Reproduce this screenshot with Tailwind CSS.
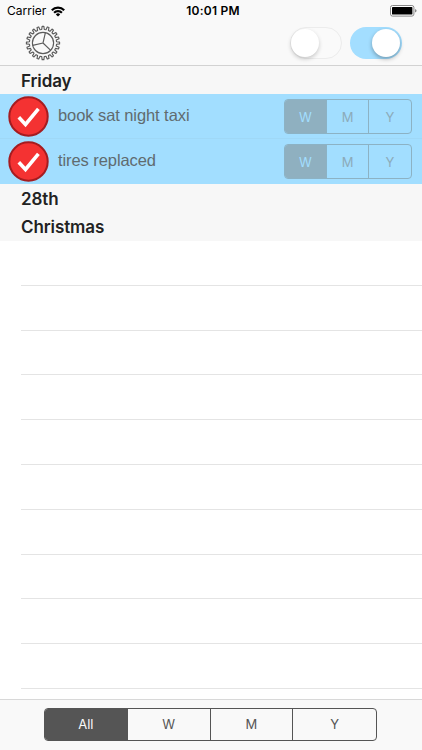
<!DOCTYPE html>
<html lang="en">
<head>
  <meta charset="UTF-8"/>
  <meta name="viewport" content="width=device-width,initial-scale=1.0"/>
  <title>Reminders</title>
  <script src="https://cdn.jsdelivr.net/npm/@tailwindcss/browser@4"></script>
</head>
<body class="bg-white font-['Inter',sans-serif] text-[#222]">
  <div class="flex flex-col h-[750px] w-[422px] overflow-hidden">

    <!-- Status bar + toolbar -->
    <header class="h-[66px] shrink-0 bg-[#f9f9f9] border-b border-[#d2d2d2]">
      <div class="grid grid-cols-3 items-center h-[22px] pl-[7px] pr-[5px] text-black">
        <div class="flex items-center gap-[6px] text-[12px]">
          <span class="w-[38px] whitespace-nowrap">Carrier</span>
          <svg class="w-[14px] h-[11px]" viewBox="0 0 14 11" fill="none" stroke="#000" stroke-width="2.2">
            <path d="M.8 4.2a8.8 8.8 0 0 1 12.4 0M3.1 6.8a5.5 5.5 0 0 1 7.8 0"/>
            <path d="M7 10.6 4.8 8.4a3.1 3.1 0 0 1 4.4 0Z" fill="#000" stroke="none"/>
          </svg>
        </div>
        <div class="pl-[2px] text-center text-[12px] font-semibold tracking-[0.25px] whitespace-nowrap">10:01 PM</div>
        <svg class="justify-self-end w-[27px] h-[12px]" viewBox="0 0 27 12">
          <rect x=".5" y=".5" width="23.4" height="10.6" rx="2" fill="#fff" stroke="#888"/>
          <rect x="2" y="2" width="20.4" height="7.6" rx=".7"/>
          <path d="M25 4v3.6q1.6-.5 1.6-1.8T25 4Z" fill="#888"/>
        </svg>
      </div>
      <div class="flex items-center h-[42px] pl-[25px] pr-[20.5px]">
        <svg class="w-[36px] h-[36px]" viewBox="-18 -18 36 36" fill="none" stroke="#5c5c5c" stroke-width="1.15" stroke-linejoin="round">
          <path id="gearTeeth"/>
          <circle r="10.6"/>
          <path d="M0 0 2.4-10.3M0 0l7.7 7.3M0 0l-10.3 2.4"/>
        </svg>
        <div class="flex items-center gap-[8px] ml-auto">
          <div class="w-[52px] h-[32px] p-[0.5px] rounded-full border-[1.5px] border-[#ececec] bg-[#fafafa]">
            <div class="w-[28px] h-[28px] rounded-full bg-white shadow-[0_2px_4px_rgba(0,0,0,0.2)]"></div>
          </div>
          <div class="flex justify-end w-[52px] h-[32px] p-[2px] rounded-full bg-[#a3deff]">
            <div class="w-[28px] h-[28px] rounded-full bg-white shadow-[0_2px_4px_rgba(0,0,0,0.3)]"></div>
          </div>
        </div>
      </div>
    </header>

    <main class="flex-1 overflow-hidden">
      <h2 class="h-[28px] pl-[21px] bg-[#f7f7f7] text-[17px] leading-[30px] font-semibold tracking-[-0.1px]">Friday</h2>

      <div class="flex items-center h-[45px] pl-[8px] pr-[10px] bg-[#a2deff] border-b border-[#9fd8f7]">
        <svg class="w-[41px] h-[41px] shrink-0" viewBox="0 0 41 41">
          <circle cx="20.5" cy="20.5" r="19.2" fill="#f43232" stroke="#a51c20" stroke-width="2"/>
          <path d="m10.8 21.2 6.7 7.2L30.4 12.8" fill="none" stroke="#fff" stroke-width="3.6"/>
        </svg>
        <span class="ml-[9px] pb-[2px] font-['Liberation_Sans',sans-serif] text-[16.5px] tracking-[-0.08px] text-[#606b6f] whitespace-nowrap">book sat night taxi</span>
        <div class="grid grid-cols-3 w-[128px] h-[35px] ml-auto rounded-[4px] border border-[#8cb2c4] divide-x divide-[#8cb2c4] overflow-hidden text-center text-[13px] leading-[34px] text-[#8cabba]">
          <span class="bg-[#8fb0c0] text-[#a2deff]">W</span><span>M</span><span>Y</span>
        </div>
      </div>
      <div class="flex items-center h-[44.5px] pl-[8px] pr-[10px] bg-[#a2deff]">
        <svg class="w-[41px] h-[41px] shrink-0" viewBox="0 0 41 41">
          <circle cx="20.5" cy="20.5" r="19.2" fill="#f43232" stroke="#a51c20" stroke-width="2"/>
          <path d="m10.8 21.2 6.7 7.2L30.4 12.8" fill="none" stroke="#fff" stroke-width="3.6"/>
        </svg>
        <span class="ml-[9px] pb-[2px] font-['Liberation_Sans',sans-serif] text-[16.5px] tracking-[-0.08px] text-[#606b6f] whitespace-nowrap">tires replaced</span>
        <div class="grid grid-cols-3 w-[128px] h-[35px] ml-auto rounded-[4px] border border-[#8cb2c4] divide-x divide-[#8cb2c4] overflow-hidden text-center text-[13px] leading-[34px] text-[#8cabba]">
          <span class="bg-[#8fb0c0] text-[#a2deff]">W</span><span>M</span><span>Y</span>
        </div>
      </div>

      <h2 class="h-[28.5px] pl-[21px] bg-[#f7f7f7] text-[17px] leading-[31px] font-semibold tracking-[-0.1px]">28th</h2>
      <h2 class="h-[28.5px] pl-[21px] bg-[#f7f7f7] text-[17px] leading-[31px] font-semibold tracking-[-0.1px]">Christmas</h2>

      <!-- Empty rows -->
      <div class="ml-[21px] pt-[0.5px]">
        <div class="h-[44.8px] border-b border-[#e4e4e4]"></div>
        <div class="h-[44.8px] border-b border-[#e4e4e4]"></div>
        <div class="h-[44.8px] border-b border-[#e4e4e4]"></div>
        <div class="h-[44.8px] border-b border-[#e4e4e4]"></div>
        <div class="h-[44.8px] border-b border-[#e4e4e4]"></div>
        <div class="h-[44.8px] border-b border-[#e4e4e4]"></div>
        <div class="h-[44.8px] border-b border-[#e4e4e4]"></div>
        <div class="h-[44.8px] border-b border-[#e4e4e4]"></div>
        <div class="h-[44.8px] border-b border-[#e4e4e4]"></div>
        <div class="h-[44.8px] border-b border-[#e4e4e4]"></div>
      </div>
    </main>

    <!-- Filter bar -->
    <footer class="h-[51px] shrink-0 pt-[8px] bg-[#f9f9f9] border-t border-[#d8d8d8]">
      <div class="grid grid-cols-4 w-[333px] h-[33px] ml-[44px] rounded-[4px] border border-[#555] divide-x divide-[#555] overflow-hidden text-center text-[13px] leading-[31px] text-[#555]">
        <span class="bg-[#555] text-[#f9f9f9]">All</span><span>W</span><span>M</span><span>Y</span>
      </div>
    </footer>

  </div>

  <script>
    // outline of the settings gear
    const teeth = 20;
    const points = [];
    for (let i = 0; i < teeth; i++) {
      [[-0.30, 13.6], [-0.17, 16.6], [0.17, 16.6], [0.30, 13.6]].forEach(([offset, r]) => {
        const a = (i + offset) * 2 * Math.PI / teeth;
        points.push(`${(r * Math.sin(a)).toFixed(2)} ${(-r * Math.cos(a)).toFixed(2)}`);
      });
    }
    document.getElementById("gearTeeth").setAttribute("d", `M${points.join("L")}Z`);
  </script>
</body>
</html>
